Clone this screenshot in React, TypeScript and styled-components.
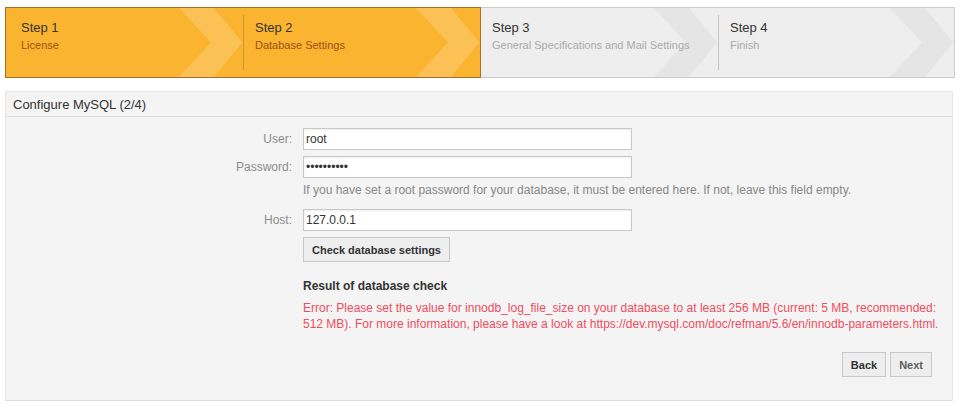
import React from "react";
import styled, { createGlobalStyle } from "styled-components";

const Global = createGlobalStyle`
  html, body { margin: 0; padding: 0; background: #fff; }
  body { font-family: "Liberation Sans", Arial, sans-serif; color: #333; }
  * { box-sizing: border-box; }
`;

const Page = styled.div`
  padding: 7px 0 0 5px;
  width: 955px;
`;

const Wizard = styled.div`
  display: flex;
  width: 950px;
  height: 71px;
`;

type StepState = "done" | "todo";

const Step = styled.div<{ $state: StepState; $first?: boolean; $last?: boolean; $edge?: boolean; $w: number }>`
  display: flex;
  align-items: stretch;
  width: ${(p) => p.$w}px;
  flex: 0 0 ${(p) => p.$w}px;
  background: ${(p) => (p.$state === "done" ? "#fbb430" : "#eeeeee")};
  border-top: 1px solid ${(p) => (p.$state === "done" ? "#a86d2c" : "#cbcbcb")};
  border-bottom: 1px solid ${(p) => (p.$state === "done" ? "#a86d2c" : "#cbcbcb")};
  border-left: ${(p) => (p.$first ? "1px solid #a86d2c" : "0")};
  border-right: ${(p) =>
    p.$edge ? "1px solid #a86d2c" : p.$last ? "1px solid #cbcbcb" : "0"};
`;

const Separator = styled.span<{ $state: StepState }>`
  flex: 0 0 1px;
  margin: 7px 0;
  background: ${(p) => (p.$state === "done" ? "#d4962c" : "#c4c4c4")};
`;

const StepText = styled.div<{ $pad: number }>`
  position: relative;
  flex: 1 1 0;
  min-width: 0;
  padding: 12px 0 0 ${(p) => p.$pad}px;
  white-space: nowrap;
`;

const StepTitle = styled.div`
  font-size: 13px;
  line-height: 16px;
  color: #333;
`;

const StepSub = styled.div<{ $state: StepState }>`
  margin-top: 3px;
  font-size: 11px;
  line-height: 13px;
  color: ${(p) => (p.$state === "done" ? "#995116" : "#aaaaaa")};
`;

const Chevron = styled.svg`
  flex: 0 0 64px;
  width: 64px;
  height: 69px;
  display: block;
`;

const Panel = styled.section`
  margin-top: 13px;
  width: 948px;
  background: #f4f4f4;
  border: 1px solid #e6e6e6;
  border-bottom-color: #dddddd;
`;

const PanelHeader = styled.h2`
  margin: 0;
  height: 25px;
  padding-left: 7px;
  font-size: 13px;
  line-height: 25px;
  font-weight: normal;
  color: #333;
  border-bottom: 1px solid #dedede;
`;

const PanelBody = styled.div`
  padding: 11px 0 23px 0;
`;

const Row = styled.div<{ $mb?: number; $mt?: number }>`
  display: grid;
  grid-template-columns: 286px 1fr;
  column-gap: 11px;
  align-items: center;
  margin-top: ${(p) => p.$mt ?? 0}px;
  margin-bottom: ${(p) => p.$mb ?? 0}px;
`;

const Label = styled.label`
  text-align: right;
  font-size: 12px;
  color: #8c8c8c;
`;

const Input = styled.input`
  width: 329px;
  height: 22px;
  padding: 0 2px;
  border: 1px solid #c8c8c8;
  background: #fff;
  box-shadow: inset 0 1px 2px rgba(0, 0, 0, 0.08);
  font-family: "Liberation Sans", Arial, sans-serif;
  font-size: 12px;
  color: #333;
  outline: none;
`;

const Hint = styled.div`
  font-size: 12px;
  line-height: 16px;
  color: #888;
`;

const Button = styled.button<{ $muted?: boolean }>`
  height: 25px;
  padding: 0 8px;
  border: 1px solid #c8c8c8;
  background: #eeeeee;
  font-family: "Liberation Sans", Arial, sans-serif;
  font-size: 11px;
  font-weight: bold;
  color: ${(p) => (p.$muted ? "#5e5e5e" : "#333")};
  cursor: pointer;
`;

const ResultTitle = styled.div`
  font-size: 12px;
  font-weight: bold;
  line-height: 16px;
  color: #333;
`;

const ErrorText = styled.div`
  margin-top: 6px;
  font-size: 12px;
  line-height: 16px;
  color: #ef4c5e;
`;

const Actions = styled.div`
  display: flex;
  justify-content: flex-end;
  gap: 4px;
  margin-top: 20px;
  padding-right: 20px;
`;

const steps: { title: string; sub: string; state: StepState; w: number }[] = [
  { title: "Step 1", sub: "License", state: "done", w: 238 },
  { title: "Step 2", sub: "Database Settings", state: "done", w: 238 },
  { title: "Step 3", sub: "General Specifications and Mail Settings", state: "todo", w: 237 },
  { title: "Step 4", sub: "Finish", state: "todo", w: 237 },
];

export default function App() {
  return (
    <>
      <Global />
      <Page>
        <Wizard>
          {steps.map((s, i) => {
            const showSep = i === 1 || i === 3;
            const pad = i === 0 ? 15 : 11;
            return (
              <Step
                key={s.title}
                $state={s.state}
                $w={s.w}
                $first={i === 0}
                $edge={i === 1}
                $last={i === 3}
              >
                {showSep && <Separator $state={s.state} />}
                <StepText $pad={pad}>
                  <StepTitle>{s.title}</StepTitle>
                  <StepSub $state={s.state}>{s.sub}</StepSub>
                </StepText>
                <Chevron viewBox="0 0 64 69" preserveAspectRatio="none">
                  <polygon
                    points="0,0 35,0 63.5,34.5 35,69 0,69 32,34.5"
                    fill={s.state === "done" ? "#fcc154" : "#e5e5e5"}
                  />
                </Chevron>
              </Step>
            );
          })}
        </Wizard>

        <Panel>
          <PanelHeader>Configure MySQL (2/4)</PanelHeader>
          <PanelBody>
            <Row $mb={6}>
              <Label>User:</Label>
              <Input type="text" defaultValue="root" readOnly />
            </Row>
            <Row>
              <Label>Password:</Label>
              <Input type="password" defaultValue="0123456789" readOnly />
            </Row>
            <Row $mt={4} $mb={11}>
              <span />
              <Hint>
                If you have set a root password for your database, it must be entered here. If not,
                leave this field empty.
              </Hint>
            </Row>
            <Row $mb={6}>
              <Label>Host:</Label>
              <Input type="text" defaultValue="127.0.0.1" readOnly />
            </Row>
            <Row $mb={16}>
              <span />
              <div>
                <Button>Check database settings</Button>
              </div>
            </Row>
            <Row>
              <span />
              <div>
                <ResultTitle>Result of database check</ResultTitle>
                <ErrorText>
                  Error: Please set the value for innodb_log_file_size on your database to at least
                  256 MB (current: 5 MB, recommended: 512 MB). For more information, please have a
                  look at https://dev.mysql.com/doc/refman/5.6/en/innodb-parameters.html.
                </ErrorText>
              </div>
            </Row>
            <Actions>
              <Button>Back</Button>
              <Button $muted>Next</Button>
            </Actions>
          </PanelBody>
        </Panel>
      </Page>
    </>
  );
}
